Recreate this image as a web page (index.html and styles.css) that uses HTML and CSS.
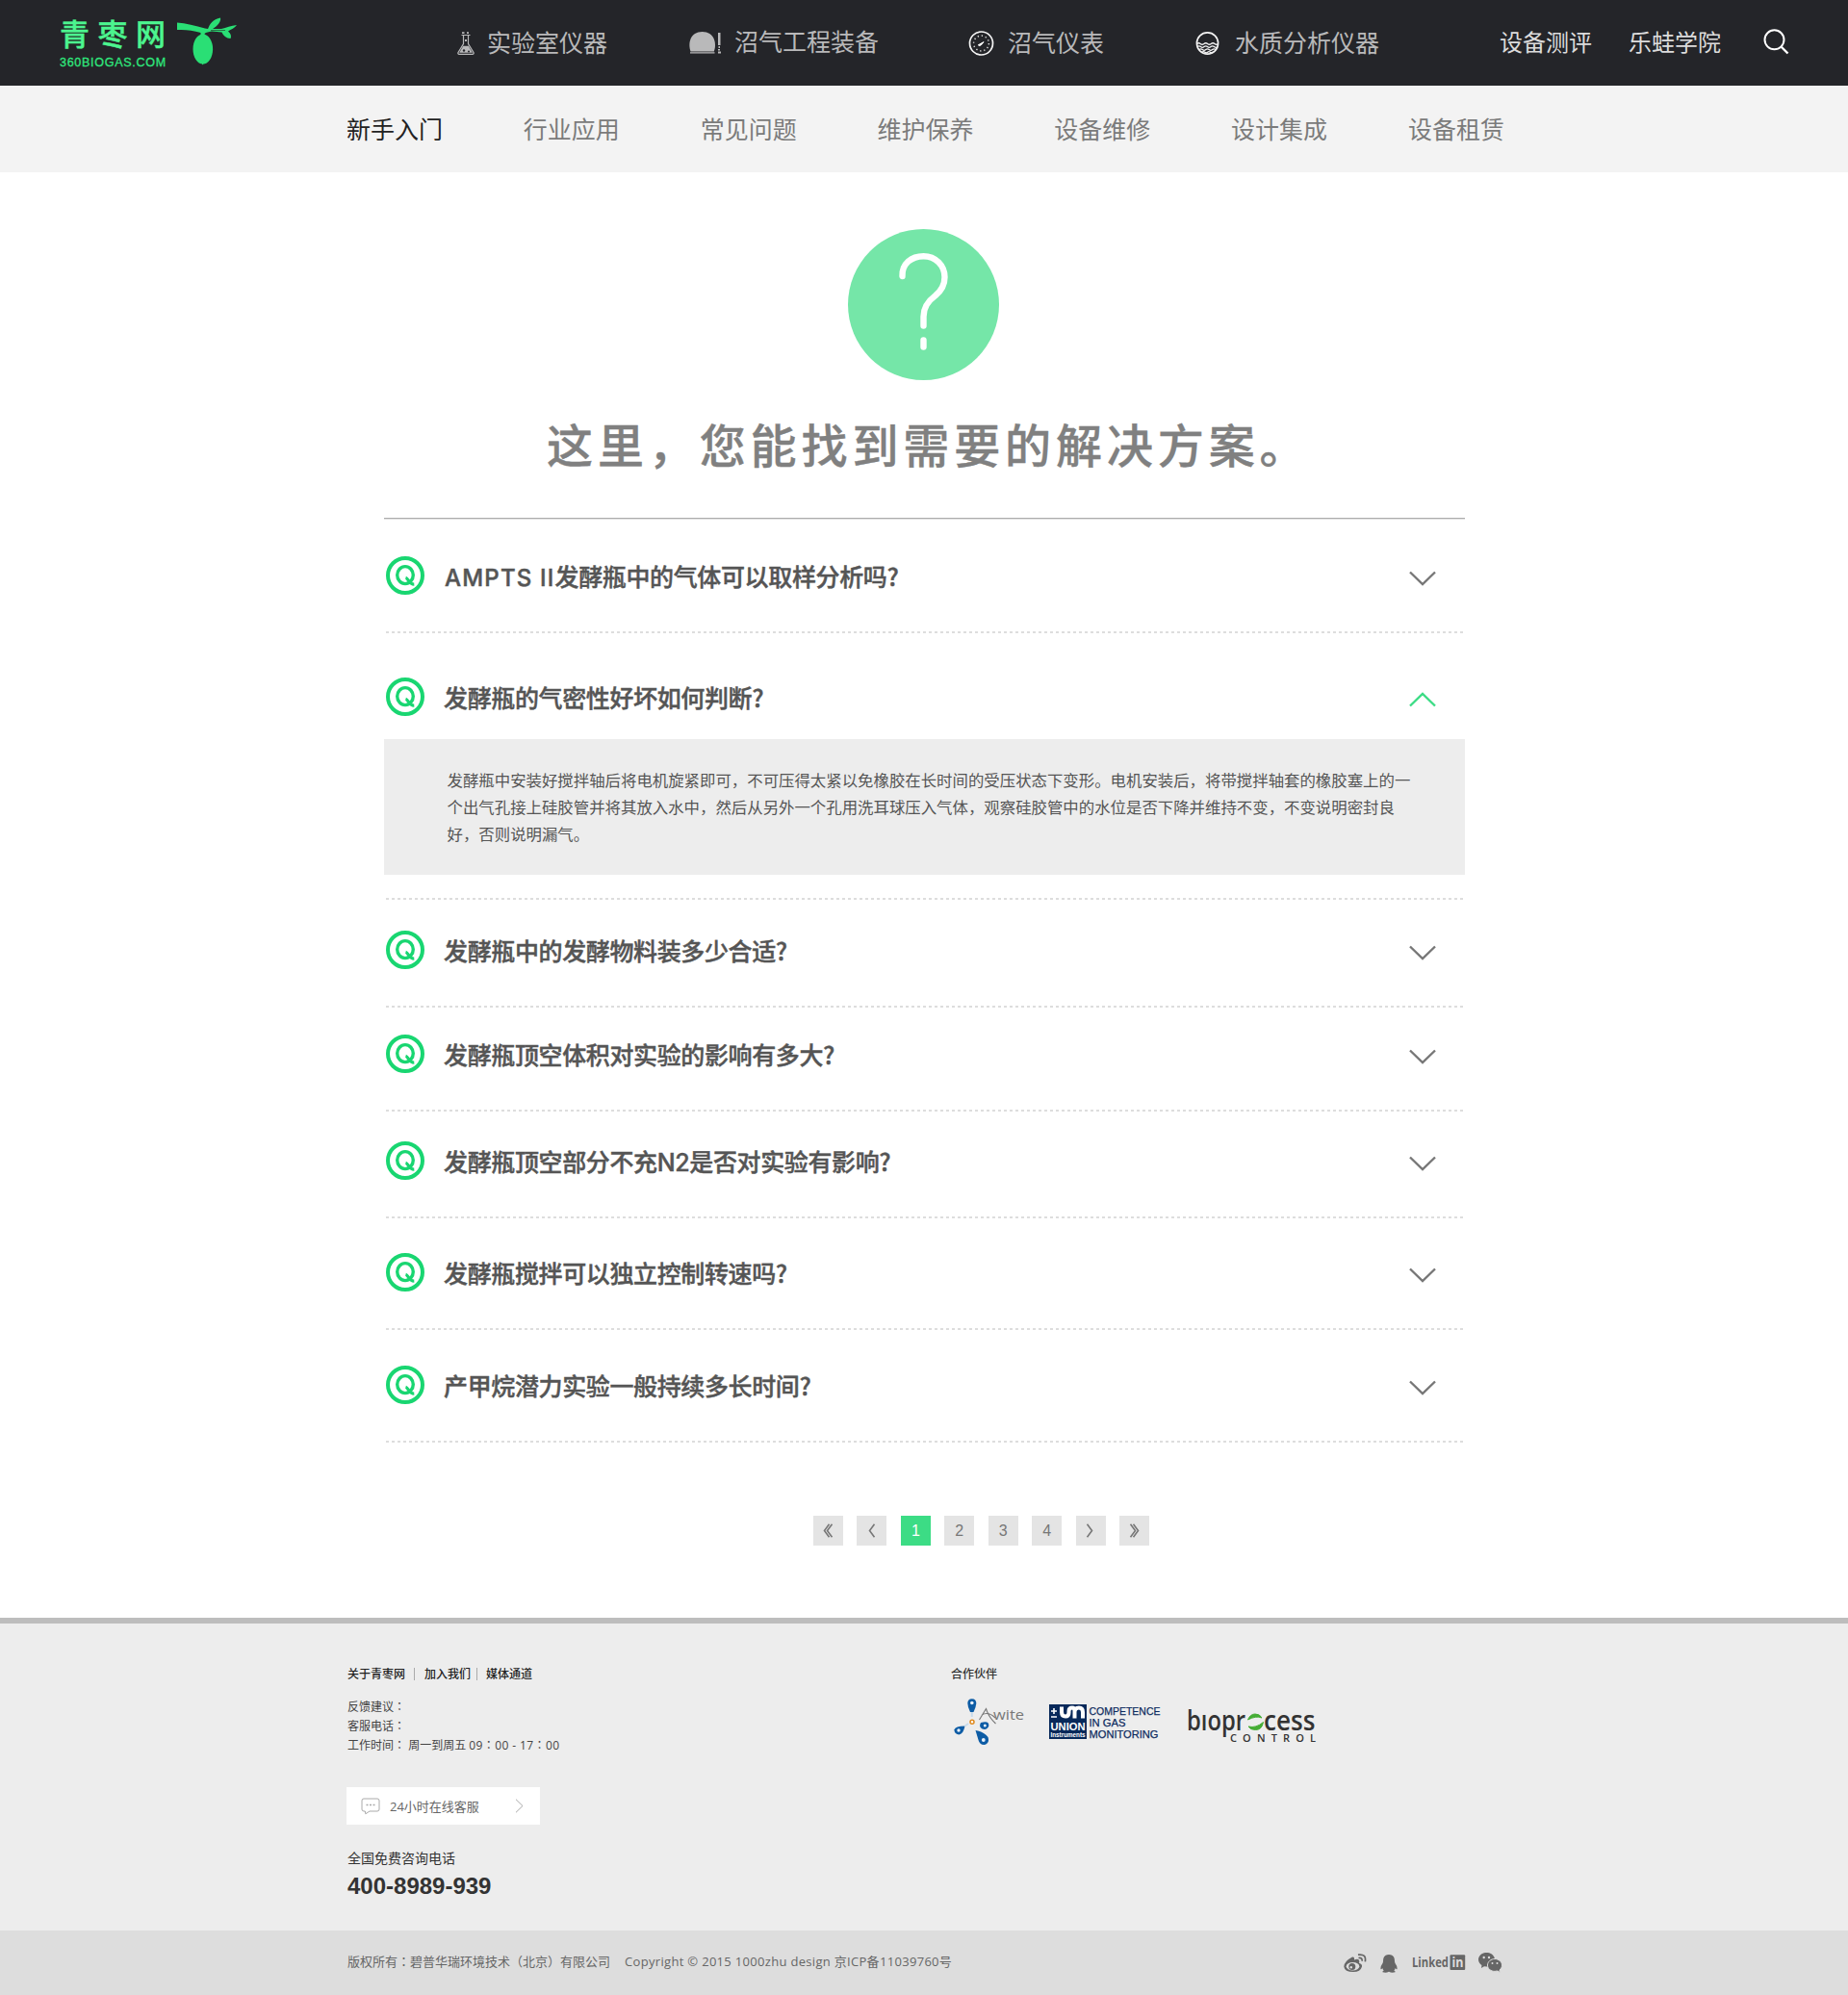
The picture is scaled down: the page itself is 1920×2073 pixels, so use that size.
FILE: index.html
```html
<!DOCTYPE html>
<html lang="zh-CN">
<head>
<meta charset="utf-8">
<title>青枣网 - 新手入门</title>
<link rel="stylesheet" href="styles.css">
</head>
<body>
<svg class="defs" width="0" height="0" aria-hidden="true">
  <symbol id="q" viewBox="0 0 40 40">
    <circle cx="20" cy="20" r="18" fill="none" stroke="#19d671" stroke-width="4"/>
    <ellipse cx="20" cy="19.6" rx="8.3" ry="9" fill="none" stroke="#19d671" stroke-width="3.4"/>
    <path d="M20.5 22.2 C23.5 23 24 29.5 29.3 29.2" fill="none" stroke="#19d671" stroke-width="3.2"/>
  </symbol>
  <symbol id="chev" viewBox="0 0 28 16">
    <path d="M1 1.5 L14 14 L27 1.5" fill="none" stroke="currentColor" stroke-width="2.4"/>
  </symbol>
</svg>

<header class="header">
  <a class="logo">
    <span class="logo-words">
      <span class="logo-name">青枣网</span>
      <span class="logo-url">360BIOGAS.COM</span>
    </span>
    <svg class="logo-fruit" width="62" height="50" viewBox="0 0 62 50" fill="#2adf75">
      <path d="M0 5.500 C9 6 19 9 29 11.500 L32 12 C34 7 37 2 45 .5 C46 4 42 9 37 12 L46 12 C51 11 56 8.500 62 8 C60 11 56 12.500 53 14.500 C55 16 57 19 55.500 22 C51 22 48 19 46.500 15.500 L36 14.500 C33 15 30 15.500 28.500 17 L29 20 L24.500 20 L24.500 16 C16 13.500 9 12.500 0 13 Z"/>
      <path d="M35 13.500 H50" stroke="#242529" stroke-width=".6"/>
      <ellipse cx="26.800" cy="33" rx="10.300" ry="15.500"/>
      <path d="M25 46 L26.500 49.500 L29 46 Z"/>
    </svg>
  </a>
  <a class="nav nav-lab">
    <svg width="18" height="24" viewBox="0 0 18 24" fill="none" stroke="#b9b9ba" stroke-width="1.200">
      <path d="M4.500 3.500 H13.500 M6.500 3.500 V12.500 L.9 21.800 Q.6 23.300 2 23.300 H16 Q17.400 23.300 17.100 21.800 L11.500 12.500 V3.500"/>
      <path d="M6.200 14.800 H11.800 L15.800 21.700 H2.200 Z" fill="#b9b9ba" stroke="none"/>
      <path d="M5 .3 H7.500 V2 H5 Z M10 .3 H12 V2 H10 Z M8 8 H10 V10 H8 Z" fill="#b9b9ba" stroke="none"/>
      <circle cx="7" cy="19.500" r="1.200" fill="#242529" stroke="none"/><circle cx="12" cy="20.500" r="1" fill="#242529" stroke="none"/>
    </svg><span>实验室仪器</span></a>
  <a class="nav nav-eng">
    <svg width="33" height="23" viewBox="0 0 33 23" fill="#b9b9ba">
      <path d="M1.500 20.500 C-1.500 12 1 0 13.700 0 C26 0 29 12 25.800 20.500 Z"/>
      <path d="M1 21.300 H26.500 V22.600 H1 Z M30 1 H32.500 V14 H30 Z M30.500 15 H32 V17 H30.500 Z M30 18 H32 V19.500 H30 Z M30 20.500 H33 V22.500 H30 Z"/>
    </svg><span>沼气工程装备</span></a>
  <a class="nav nav-meter">
    <svg width="27" height="26" viewBox="0 0 27 26">
      <circle cx="13.500" cy="13" r="12" fill="none" stroke="#f4f4f4" stroke-width="1.700"/>
      <circle cx="13.500" cy="13" r="7.900" fill="none" stroke="#ddd" stroke-width="1.500" stroke-dasharray="1.300 2.836"/>
      <path d="M10.300 14.800 L16 11.600 L13.800 14.400 Q11.500 16.500 10.300 14.800Z" fill="#fff" stroke="#fff" stroke-width="1"/>
    </svg><span>沼气仪表</span></a>
  <a class="nav nav-water">
    <svg width="25" height="24" viewBox="0 0 25 24" fill="none" stroke="#f4f4f4">
      <circle cx="12.500" cy="12" r="11.100" stroke-width="1.600"/>
      <path stroke-width="1.300" d="M1.500 12.500 q1.900 -1.500 3.700 0 t3.700 0 t3.700 0 t3.700 0 t3.700 0 t3.500 0 M2 15.600 q1.800 -1.500 3.500 0 t3.500 0 t3.500 0 t3.500 0 t3.500 0 t3.500 0 M4 18.600 q1.700 -1.400 3.400 0 t3.400 0 t3.400 0 t3.400 0 t3.400 0 M7 21.300 q1.400 -1.200 2.800 0 t2.800 0 t2.800 0 t2.800 0"/>
    </svg><span>水质分析仪器</span></a>
  <a class="nav nav-review"><span>设备测评</span></a>
  <a class="nav nav-school"><span>乐蛙学院</span></a>
  <svg class="search" width="27" height="27" viewBox="0 0 27 27" fill="none" stroke="#fff" stroke-width="2">
    <circle cx="11.500" cy="11.300" r="10"/><path d="M18.500 18.500 L25.500 25.500" stroke-width="2.400"/>
  </svg>
</header>

<nav class="subnav">
  <a class="on">新手入门</a><a>行业应用</a><a>常见问题</a><a>维护保养</a><a>设备维修</a><a>设计集成</a><a>设备租赁</a>
</nav>

<main class="main">
  <svg class="hero-icon" width="157" height="157" viewBox="0 0 157 157">
    <circle cx="78.500" cy="78.500" r="78.500" fill="#75e6a8"/>
    <path d="M56.500 49 C56 36 66 28.200 78.500 28.200 C91 28.200 100.500 38 100.500 50 C100.500 58 97 64 91 69 C83 75 78.500 81 78.500 91 V100.500 M78.500 115.500 V122.500" fill="none" stroke="#fff" stroke-width="6.400" stroke-linecap="round"/>
  </svg>
  <h1 class="title">这里，您能找到需要的解决方案。</h1>

  <section class="faq">
    <article class="item i1">
      <div class="ask"><svg class="q"><use href="#q"/></svg><h2><span class="latin">AMPTS II</span>发酵瓶中的气体可以取样分析吗?</h2><svg class="chev"><use href="#chev"/></svg></div>
    </article>
    <article class="item i2 open">
      <div class="ask"><svg class="q"><use href="#q"/></svg><h2>发酵瓶的气密性好坏如何判断?</h2><svg class="chev"><use href="#chev"/></svg></div>
      <p class="answer">发酵瓶中安装好搅拌轴后将电机旋紧即可，不可压得太紧以免橡胶在长时间的受压状态下变形。电机安装后，将带搅拌轴套的橡胶塞上的一<br>个出气孔接上硅胶管并将其放入水中，然后从另外一个孔用洗耳球压入气体，观察硅胶管中的水位是否下降并维持不变，不变说明密封良<br>好，否则说明漏气。</p>
    </article>
    <article class="item i3">
      <div class="ask"><svg class="q"><use href="#q"/></svg><h2>发酵瓶中的发酵物料装多少合适?</h2><svg class="chev"><use href="#chev"/></svg></div>
    </article>
    <article class="item i4">
      <div class="ask"><svg class="q"><use href="#q"/></svg><h2>发酵瓶顶空体积对实验的影响有多大?</h2><svg class="chev"><use href="#chev"/></svg></div>
    </article>
    <article class="item i5">
      <div class="ask"><svg class="q"><use href="#q"/></svg><h2>发酵瓶顶空部分不充<span class="formula">N2</span>是否对实验有影响?</h2><svg class="chev"><use href="#chev"/></svg></div>
    </article>
    <article class="item i6">
      <div class="ask"><svg class="q"><use href="#q"/></svg><h2>发酵瓶搅拌可以独立控制转速吗?</h2><svg class="chev"><use href="#chev"/></svg></div>
    </article>
    <article class="item i7">
      <div class="ask"><svg class="q"><use href="#q"/></svg><h2>产甲烷潜力实验一般持续多长时间?</h2><svg class="chev"><use href="#chev"/></svg></div>
    </article>
  </section>

  <div class="pager">
    <a><svg width="12" height="15" viewBox="0 0 12 15"><path d="M6.500 .8 L1.500 7.500 L6.500 14.200 M9.500 .8 L4.500 7.500 L9.500 14.200"/></svg></a>
    <a><svg width="12" height="15" viewBox="0 0 12 15"><path d="M8.500 .8 L3.500 7.500 L8.500 14.200"/></svg></a>
    <a class="on">1</a><a>2</a><a>3</a><a>4</a>
    <a><svg width="12" height="15" viewBox="0 0 12 15"><path d="M2.500 .8 L7.500 7.500 L2.500 14.200"/></svg></a>
    <a><svg width="12" height="15" viewBox="0 0 12 15"><path d="M2.500 .8 L7.500 7.500 L2.500 14.200 M5.500 .8 L10.500 7.500 L5.500 14.200"/></svg></a>
  </div>
</main>

<footer class="footer">
  <div class="cols">
    <div class="about">
      <div class="links"><a>关于青枣网</a><i></i><a>加入我们</a><i class="near"></i><a>媒体通道</a></div>
      <ul class="info">
        <li>反馈建议<b lang="zh-TW">：</b></li>
        <li>客服电话<b lang="zh-TW">：</b></li>
        <li>工作时间<b lang="zh-TW">：</b> 周一到周五 <span class="hours">09<b lang="zh-TW">：</b>00 - 17<b lang="zh-TW">：</b>00</span></li>
      </ul>
      <a class="service">
        <svg width="20" height="18" viewBox="0 0 20 18" fill="none" stroke="#aaa"><path d="M3 1 H17 Q19 1 19 3 V12 Q19 14 17 14 H9 L4.800 16.800 L4.300 14 H3 Q1 14 1 12 V3 Q1 1 3 1 Z"/><path d="M5.500 7.500 h2 M9 7.500 h2 M12.500 7.500 h2" stroke-width="1.600"/></svg>
        <span>24小时在线客服</span>
        <svg width="9" height="15" viewBox="0 0 9 15" fill="none" stroke="#aaa"><path d="M1 .7 L8 7.500 L1 14.300"/></svg>
      </a>
      <p class="hot">全国免费咨询电话</p>
      <p class="phone">400-8989-939</p>
    </div>
    <div class="partners">
      <h3>合作伙伴</h3>
      <div class="brands">
        <svg width="76" height="50" viewBox="0 0 76 50">
          <g fill="#0d5ca5">
            <path d="M14.300 5 Q14.300 .3 18.800 .3 Q23.300 .3 23.300 5 Q23 9 20.500 14 H17 Q14.500 9 14.300 5Z"/>
            <path d="M11.500 28.500 Q10 36.500 5.500 37.500 Q.8 37 .4 32.500 Q1.500 28.500 11.500 28.500Z"/>
            <path d="M28 25 Q37 22.500 36.300 28.500 Q34.500 33 29.500 31.500 Q25.500 29 28 25Z"/>
            <path d="M22.500 33 Q31 34 35.500 40 Q37.500 46 32 48 Q27 48.500 25.500 43 Z"/>
          </g>
          <g fill="#e8f1fa"><circle cx="18.800" cy="4.500" r="1.800"/><circle cx="5" cy="33" r="1.700"/><circle cx="32.300" cy="28" r="1.500"/><circle cx="30.800" cy="43" r="1.900"/></g>
          <path d="M18.800 14 V19 M11.500 28.500 L15 26" stroke="#c7dbec" stroke-width="2"/>
          <circle cx="19" cy="24.200" r="2" fill="#fff" stroke="#e08a1e" stroke-width="1.500"/>
          <path d="M26.500 22 L33.500 10.500 Q36 19 43.500 26 M29 17 Q36 13 43 20" fill="none" stroke="#777" stroke-width="1.100"/>
          <text x="41" y="22" class="t-awite" textLength="32" lengthAdjust="spacingAndGlyphs">wite</text>
        </svg>
        <svg class="union" width="117" height="38" viewBox="0 0 117 38">
          <rect x="0" y="1" width="39" height="36" fill="#08295a"/>
          <path d="M2 8 H8 M5 5 V11 M2 14 H8" stroke="#fff" stroke-width="1.600"/>
          <path d="M13 3.500 V9 Q13 13.500 17 13.500 Q20.500 13.500 20.500 9.500 V8 Q20.500 4.500 24 4.500 Q26.500 4.500 26.500 8 V15.500 M26.500 9 Q26.500 4.500 31 4.500 Q35 4.500 35 9 V15.500" fill="none" stroke="#fff" stroke-width="4"/>
          <text x="1.500" y="28" class="t-union" textLength="36" lengthAdjust="spacingAndGlyphs">UNION</text>
          <text x="1.500" y="35" class="t-inst" textLength="36" lengthAdjust="spacingAndGlyphs">Instruments</text>
          <g class="t-comp"><text x="41.500" y="11.500" textLength="74" lengthAdjust="spacingAndGlyphs">COMPETENCE</text><text x="41.500" y="23.500" textLength="38" lengthAdjust="spacingAndGlyphs">IN GAS</text><text x="41.500" y="35.500" textLength="72" lengthAdjust="spacingAndGlyphs">MONITORING</text></g>
        </svg>
        <svg class="bio" width="136" height="40" viewBox="0 0 136 40">
          <g class="t-bio"><text x="0" y="24.500" textLength="61" lengthAdjust="spacingAndGlyphs">bıopr</text><text x="80" y="24.500" textLength="53.500" lengthAdjust="spacingAndGlyphs">cess</text></g>
          <path d="M63.500 14 Q66 8 71 8 Q76 8 78 12 Q72 9.500 63.500 14Z M79.500 16.500 Q78 24.500 71.500 24.500 Q66 24.500 64 21 Q72 23 79.500 16.500Z" fill="#45ad35" stroke="#45ad35"/>
          <text x="45" y="36.500" class="t-ctrl" textLength="89">CONTROL</text>
        </svg>
      </div>
    </div>
  </div>
  <div class="legal">
    <p>版权所有<b lang="zh-TW">：</b>碧普华瑞环境技术<b lang="zh-TW">（</b>北京<b lang="zh-TW">）</b>有限公司<span>Copyright © 2015 1000zhu design 京ICP备11039760号</span></p>
    <div class="social">
      <svg width="24" height="20" viewBox="0 0 24 20">
        <path d="M9 3.500 Q11.500 3 11 6.500 Q16 4.500 16.300 8 Q16.300 9 16 9.700 Q19.500 10.800 19 13.500 Q17.500 19 10 19 Q1 19 .3 13.500 Q.5 8 9 3.500Z" fill="#666"/>
        <ellipse cx="9.500" cy="13.300" rx="6.800" ry="4.200" fill="#ddd"/><circle cx="8.800" cy="13.600" r="3.500" fill="#666"/><circle cx="7.800" cy="14.300" r="1.200" fill="#ddd"/>
        <path d="M15 1.200 Q24 0 22.300 8.300 M15.500 4.500 Q19.800 4 19 7.800" fill="none" stroke="#666" stroke-width="1.700"/>
      </svg>
      <svg class="qq" width="18" height="19" viewBox="0 0 18 19" fill="#666"><path d="M9 0 Q15 0 15 7 Q15 8 15.500 9 Q18 12.500 17.500 15 Q16.800 15.800 15.800 14 Q15.300 15.500 14.300 16.500 Q16 17.300 15.500 18.300 Q12 19.500 9 17.800 Q6 19.500 2.500 18.300 Q2 17.300 3.700 16.500 Q2.700 15.500 2.200 14 Q1.200 15.800 .5 15 Q0 12.500 2.500 9 Q3 8 3 7 Q3 0 9 0Z"/></svg>
      <svg class="in" width="56" height="17" viewBox="0 0 56 17"><text x="0" y="13" class="t-in" textLength="38" lengthAdjust="spacingAndGlyphs">Linked</text><rect x="39.500" y=".3" width="15.700" height="15.700" rx="1" fill="#666"/><text x="41.500" y="13" class="t-in light" textLength="12" lengthAdjust="spacingAndGlyphs">in</text></svg>
      <svg class="wx" width="25" height="21" viewBox="0 0 25 21"><path d="M8.500 0 C13 0 17 3 17 7.300 C17 11.500 13 14.500 8.500 14.500 L6 14.200 L3 16 L3.500 13 C1.500 11.800 0 9.700 0 7.300 C0 3 4 0 8.500 0Z" fill="#666"/><path d="M17 6.500 C21 6.500 24.500 9.500 24.500 13 C24.500 15 23.500 16.800 22 18 L22.300 20.500 L19.700 19 L17 19.400 C13 19.400 9.500 16.800 9.500 13 C9.500 9.500 13 6.500 17 6.500Z" fill="#666" stroke="#ddd" stroke-width="1"/><g fill="#ddd"><circle cx="5.700" cy="5" r="1.200"/><circle cx="11" cy="5" r="1.200"/><circle cx="14.500" cy="11" r="1"/><circle cx="19.500" cy="11" r="1"/></g></svg>
    </div>
  </div>
</footer>
</body>
</html>
```
FILE: styles.css
```css
* { box-sizing: border-box; margin: 0; padding: 0; }
body { font-family: "Noto Sans CJK SC", sans-serif; background: #fff; color: #333; }
svg { display: block; flex: none; overflow: visible; }
.defs { position: absolute; }

.header { display: flex; align-items: center; height: 89px; padding-left: 62px; background: #242529; }
.logo { display: flex; width: 184px; height: 89px; padding-top: 18px; justify-content: space-between; }
.logo-words { display: flex; flex-direction: column; color: #2fe87d; }
.logo-name { font-size: 31px; line-height: 32px; font-weight: 500; letter-spacing: 8.5px; width: 122px; color: #4cf58f; white-space: nowrap; -webkit-text-stroke: .4px #4cf58f; }
.logo-url { margin-top: 8px; font: 12.500px/14px "Liberation Sans", sans-serif; letter-spacing: .72px; -webkit-text-stroke: .3px #2fe87d; }
.nav { display: flex; align-items: center; font-size: 25px; line-height: 36px; color: #b9b9ba; white-space: nowrap; }
.nav span { padding-bottom: 3px; }
.nav-lab { gap: 13px; margin-left: 229px; }
.nav-eng { gap: 14px; margin-left: 85px; }
.nav-eng span { padding-bottom: 5px; }
.nav-meter { gap: 14px; margin-left: 93px; }
.nav-water { gap: 16px; margin-left: 95px; }
.nav-review, .nav-school { font-size: 24px; color: #dcdcdc; }
.nav-review { margin-left: 125px; }
.nav-school { margin-left: 38px; }
.search { margin: 0 0 2px 44px; }

.subnav { display: flex; align-items: center; gap: 83.800px; height: 90px; padding: 0 0 3px 360px; background: #f3f3f3; font-size: 25px; color: #7b7b7b; }
.subnav .on { color: #222; }

.main { display: flex; flex-direction: column; height: 1502px; padding-top: 59px; }
.hero-icon { margin-left: 881px; }
.title { margin: 28px 0 0 568px; height: 74px; font-size: 48px; line-height: 74px; font-weight: 500; letter-spacing: 4.900px; color: #808080; white-space: nowrap; -webkit-text-stroke: .4px #808080; }
.faq { width: 1123px; margin: 41px 0 0 399px; border-top: 1px solid #adadad; box-shadow: inset 0 1px #e2e2e2; }
.item { padding-bottom: 40px; background: repeating-linear-gradient(90deg, #ddd 0 3px, transparent 3px 6px) 2px 100% / 1121px 2px no-repeat; }
.i1 { padding-top: 39px; }
.i2 { padding-top: 46px; padding-bottom: 26px; }
.i3 { padding-top: 32px; }
.i4 { padding-top: 28px; }
.i5 { padding-top: 31px; }
.i6 { padding-top: 36px; }
.i7 { padding-top: 37px; }
.ask { display: flex; align-items: center; height: 40px; padding: 0 30px 0 2px; }
.q { width: 40px; height: 40px; }
.ask h2 { flex: 1; margin-left: 20px; font-size: 25px; line-height: 40px; font-weight: 500; letter-spacing: -.37px; color: #555; -webkit-text-stroke: .45px #555; }
.latin { margin-left: 1px; font: 500 24px/24px Inter, sans-serif; letter-spacing: 1.200px; }
.formula { font-family: Inter, sans-serif; line-height: 24px; }
.chev { width: 28px; height: 16px; margin-top: 6px; color: #777; }
.open .chev { color: #3cdc85; transform: rotate(180deg); }
.answer { height: 141px; margin-top: 24px; padding: 27.500px 0 0 65.500px; background: #ededed; font-size: 16.410px; line-height: 28px; color: #555; white-space: nowrap; }

.pager { display: flex; justify-content: space-between; width: 349px; margin: 76px 0 0 845px; }
.pager a { display: flex; align-items: center; justify-content: center; width: 31px; height: 31px; background: #e4e4e4; color: #777; font: 16px/31px "Liberation Sans", sans-serif; }
.pager .on { background: #3cdc85; color: #fff; }
.pager path { fill: none; stroke: #777; stroke-width: 1.600; }

.footer { border-top: 6px solid #bdbdbd; background: #ededed; font-family: "Open Sans", "Noto Sans CJK SC", sans-serif; }
.footer b { font-family: "Noto Sans CJK TC", sans-serif; font-weight: 400; line-height: 1; }
.cols { display: flex; height: 319px; padding: 43px 0 0 361px; }
.about { width: 627px; }
.links { display: flex; align-items: center; height: 18px; font-size: 12px; font-weight: 500; color: #222; }
.links i { width: 1px; height: 13px; margin: 0 10px 0 9px; background: #aaa; }
.links .near { margin: 0 9px 0 6px; }
.info { margin-top: 16px; list-style: none; font-size: 12px; line-height: 20px; color: #444; }
.info li { height: 20px; }
.hours { letter-spacing: .4px; }
.service { display: flex; align-items: center; width: 201px; height: 39px; margin: 33px 0 0 -1px; padding-left: 15px; background: #fff; font-size: 13px; color: #666; }
.service span { width: 130px; margin-left: 10px; padding-bottom: 1px; }
.hot { margin-top: 24px; font-size: 14px; line-height: 22px; }
.phone { margin-top: 4px; font: bold 24px/28px "Liberation Sans", sans-serif; }
.partners h3 { padding-top: 1px; font-size: 12px; line-height: 18px; font-weight: 500; }
.brands { display: flex; margin: 16px 0 0 3px; }
.union { margin: 5px 0 0 23px; }
.bio { margin: 8px 0 0 26px; }
.t-awite { font: 15px "Open Sans", sans-serif; fill: #777; }
.t-union { font: bold 11px "Liberation Sans", sans-serif; fill: #fff; }
.t-inst { font: bold 6.500px "Liberation Sans", sans-serif; fill: #fff; }
.t-comp { font: 11.800px "Liberation Sans", sans-serif; fill: #0c2a5e; stroke: #0c2a5e; stroke-width: .25px; }
.t-bio { font: 600 29px "Open Sans", sans-serif; fill: #333; }
.t-ctrl { font: 600 11px "Open Sans", sans-serif; fill: #333; }
.legal { display: flex; align-items: center; height: 67px; padding-left: 361px; background: #ddd; font-size: 13px; color: #666; }
.legal p { width: 1035px; height: 20px; margin-bottom: 3px; line-height: 20px; white-space: nowrap; }
.legal span { margin-left: 15px; letter-spacing: .31px; }
.social { display: flex; align-items: center; }
.qq { margin: 2px 0 0 14px; }
.in { margin-left: 15px; }
.wx { margin-left: 13px; }
.t-in { font: bold 14px "Open Sans", sans-serif; fill: #666; }
.t-in.light { fill: #ddd; }
```
